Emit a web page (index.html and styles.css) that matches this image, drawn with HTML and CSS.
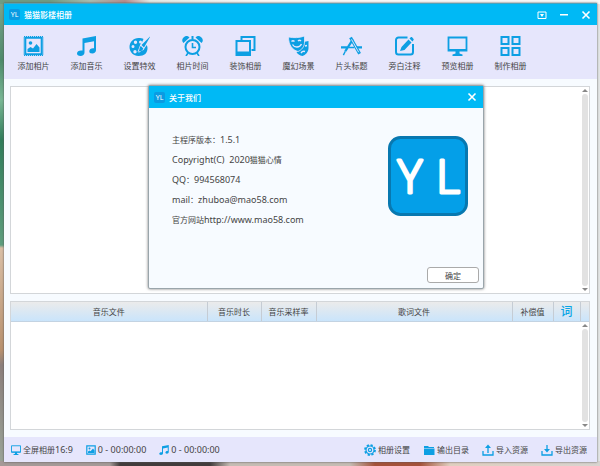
FILE: index.html
```
<!DOCTYPE html>
<html lang="zh-CN">
<head>
  <meta charset="UTF-8">
  <meta name="viewport" content="width=device-width, initial-scale=1.0">
  <title>猫猫影楼相册</title>
  <link rel="stylesheet" href="styles.css">
</head>
<body>
  <!-- shared icons -->
  <svg class="sprite" aria-hidden="true">
    <symbol id="note" viewBox="0 0 20 20">
      <path fill="currentColor" d="M6 2.500 19.500 0v14.200c0 1.900-1.600 3.300-3.700 3.300s-3-1-3-2.300c0-1.700 1.700-3 3.800-3h.9V5.200L8 7v9.500C8 18.600 6.300 20 4 20s-3.500-1-3.500-2.400c0-1.800 1.800-3.100 4-3.100H6z"/>
    </symbol>
    <symbol id="monitor" viewBox="0 0 20 20">
      <path fill="none" stroke="currentColor" stroke-width="1.800" d="M1 1.500h18v13H1z"/>
      <path fill="currentColor" d="M1 13h18v2H1zM8 15h4v2.500l3 1V20H5v-1.500l3-1z"/>
    </symbol>
    <symbol id="cross" viewBox="0 0 10 10">
      <path fill="none" stroke="currentColor" stroke-width="1.600" d="M1.500 1.500l7 7M8.500 1.500l-7 7"/>
    </symbol>
  </svg>

  <div class="window">
    <header class="titlebar">
      <span class="badge">YL</span>
      <h1 class="title">猫猫影楼相册</h1>
      <div class="windowButtons">
        <button class="windowButton" aria-label="菜单">
          <svg viewBox="0 0 10 10"><path fill="none" stroke="currentColor" d="M1 2h8v6.500H1z"/><path fill="currentColor" d="M3 4h4L5 7z"/></svg>
        </button>
        <button class="windowButton" aria-label="最小化">
          <svg viewBox="0 0 10 10"><path fill="currentColor" d="M1 4h8v1.500H1z"/></svg>
        </button>
        <button class="windowButton" aria-label="关闭"><svg><use href="#cross"/></svg></button>
      </div>
    </header>

    <nav class="toolbar">
      <button class="tool">
        <svg viewBox="0 0 20 20">
          <path fill="none" stroke="currentColor" stroke-width="2" d="M1.800 1.800h16.400v16.400H1.800z"/>
          <path fill="none" stroke="currentColor" stroke-width="1" stroke-dasharray="1 1" d="M.5.5h19v19H.5z"/>
          <circle cx="7" cy="7" r="1.800" fill="currentColor"/>
          <path fill="currentColor" d="M4 16v-3l3-2 2.500 1.500L13 8l3 3.500V16z"/>
        </svg>
        添加相片
      </button>
      <button class="tool"><svg><use href="#note"/></svg>添加音乐</button>
      <button class="tool">
        <svg viewBox="0 0 20 20">
          <path fill="currentColor" fill-rule="evenodd" d="M9 2C4 2 0 6 0 11c0 5 4 9 9 9 6 0 9-3 9-8 0-2-1-3-1-3l-4 5-4 3 1-5 4-9c-1-.7-3-1-5-1zM6 4.500a1.700 1.700 0 1 0 0 3.400 1.700 1.700 0 0 0 0-3.400zm5 0a1.500 1.500 0 1 0 0 3 1.500 1.500 0 0 0 0-3zM3.500 9a1.500 1.500 0 1 0 0 3 1.500 1.500 0 0 0 0-3zm2 5a1.700 1.700 0 1 0 0 3.400 1.700 1.700 0 0 0 0-3.400z"/>
          <path fill="#e6e6fc" d="M20 0 11 8l-3 8 6-2 3-5z"/>
          <path fill="currentColor" d="M21 0 12 9l2.500 2.500zM11.300 10l2.500 2.500c-.7 2-2 3-5 3 1.500-1 .6-3.500 2.500-5.500z"/>
        </svg>
        设置特效
      </button>
      <button class="tool">
        <svg viewBox="0 0 20 20">
          <circle cx="10" cy="11" r="7" fill="none" stroke="currentColor" stroke-width="2"/>
          <path fill="none" stroke="currentColor" stroke-width="1.600" d="M10 7v4.500h3.500M5.500 17 3.500 20M14.500 17l2 3"/>
          <path fill="currentColor" d="M1 7a3.800 3.800 0 0 1 6-5.500zM19 7a3.800 3.800 0 0 0-6-5.500z"/>
          <path fill="currentColor" d="M9 0h2v3H9z"/>
        </svg>
        相片时间
      </button>
      <button class="tool">
        <svg viewBox="0 0 20 20">
          <path fill="none" stroke="currentColor" stroke-width="2" d="M6 4V1h13v13h-3"/>
          <path fill="none" stroke="currentColor" stroke-width="2" d="M1 5h13.500v14H1z"/>
          <path fill="currentColor" d="M1 15.500h13.500V19H1z"/>
        </svg>
        装饰相册
      </button>
      <button class="tool">
        <svg viewBox="0 0 20 20">
          <path fill="currentColor" d="M15 6l5-1v7c0 4-3 7-6 8-3-.5-5-2-6-4 5-2 7-5 7-10z"/>
          <path fill="currentColor" stroke="#e6e6fc" stroke-width=".8" d="M0 1c5 1 11 1 16-1v6c0 5-3 8-6.500 9.500C4 14 0 9 0 1z"/>
          <path fill="none" stroke="#e6e6fc" stroke-width="1.400" d="M3 5.500c1-1 2-1 3 0M9.500 5c1-1 2-1 3 0M4 8.500c2 3.500 7 3.500 9-.5M12.500 17c1-1.500 2.500-2 4-1.500M16.500 10l2-.5"/>
        </svg>
        魔幻场景
      </button>
      <button class="tool">
        <svg viewBox="0 0 22 20">
          <path fill="none" stroke="currentColor" stroke-width="2.400" d="M12.500 3 4.500 15.500M0 11.500h7M15 11.500h7"/>
          <path fill="none" stroke="currentColor" stroke-width="3.200" d="M10 1l9.500 17"/>
          <path fill="none" stroke="#e6e6fc" stroke-width="1" d="M11 3l7.500 13.500"/>
          <path fill="none" stroke="currentColor" stroke-width="1.500" d="M4.500 15.500l-2 4M8 11.500h6"/>
        </svg>
        片头标题
      </button>
      <button class="tool">
        <svg viewBox="0 0 20 20">
          <path fill="none" stroke="currentColor" stroke-width="2" d="M13 1.500H4A2.500 2.500 0 0 0 1.500 4v12A2.500 2.500 0 0 0 4 18.500h12a2.500 2.500 0 0 0 2.500-2.500V8"/>
          <path fill="currentColor" d="M7 11l7-7.500 3 3L10 14l-4.500 1zM15 2.500 16.500 1c.7-.6 3.200 2 2.700 2.700L18 5.500z"/>
        </svg>
        旁白注释
      </button>
      <button class="tool"><svg><use href="#monitor"/></svg>预览相册</button>
      <button class="tool">
        <svg viewBox="0 0 20 20">
          <path fill="none" stroke="currentColor" stroke-width="2" d="M1 1h7v7H1zM12 1h7v7h-7zM1 12h7v7H1zM12 12h7v7h-7z"/>
        </svg>
        制作相册
      </button>
    </nav>

    <main class="content">
      <section class="panel photos">
        <div class="scrollbar"><i class="arrow up"></i><i class="thumb"></i><i class="arrow down"></i></div>
      </section>
      <section class="panel music">
        <table class="musicTable">
          <thead>
            <tr>
              <th>音乐文件</th>
              <th class="colTime">音乐时长</th>
              <th class="colRate">音乐采样率</th>
              <th>歌词文件</th>
              <th class="colOffset">补偿值</th>
              <th class="colLyric">词</th>
              <th class="colEnd"></th>
            </tr>
          </thead>
        </table>
        <div class="scrollbar"><i class="arrow up"></i><i class="thumb"></i><i class="arrow down"></i></div>
      </section>
    </main>

    <footer class="statusbar">
      <span class="status"><svg><use href="#monitor"/></svg><span>全屏相册<span class="latin">16:9</span></span></span>
      <span class="status">
        <svg viewBox="0 0 10 10"><path fill="none" stroke="currentColor" stroke-width="1.200" d="M.8.8h8.400v8.400H.8z"/><circle cx="3.500" cy="3.500" r="1" fill="currentColor"/><path fill="currentColor" d="M2 8V6.500L3.500 5.500l1 .7L7 3.500l1.500 2V8z"/></svg>
        <span class="latin">0 - 00:00:00</span>
      </span>
      <span class="status"><svg><use href="#note"/></svg><span class="latin">0 - 00:00:00</span></span>
      <div class="actions">
        <button class="action">
          <svg viewBox="0 0 12 12">
            <circle cx="6" cy="6" r="5" fill="none" stroke="currentColor" stroke-width="1.800" stroke-dasharray="2.200 1.727"/>
            <circle cx="6" cy="6" r="4" fill="none" stroke="currentColor" stroke-width="1.200"/>
            <circle cx="6" cy="6" r="1.600" fill="none" stroke="currentColor" stroke-width="1.200"/>
          </svg>相册设置
        </button>
        <button class="action">
          <svg viewBox="0 0 12 12"><path fill="currentColor" d="M1 2h4l1 1h5v1H1zM1 4.500h10.500V11H1z"/></svg>输出目录
        </button>
        <button class="action">
          <svg viewBox="0 0 12 12"><path fill="none" stroke="currentColor" stroke-width="1.300" d="M1 7v4h10V7M6 9V3"/><path fill="currentColor" d="M6 .5 9 4H3z"/></svg>导入资源
        </button>
        <button class="action">
          <svg viewBox="0 0 12 12"><path fill="none" stroke="currentColor" stroke-width="1.300" d="M1 7v4h10V7M6 1v5"/><path fill="currentColor" d="M6 8.500 9 5H3z"/></svg>导出资源
        </button>
      </div>
    </footer>
  </div>

  <div class="dialog" role="dialog" aria-labelledby="aboutTitle">
    <div class="dialogTitle">
      <span class="badge">YL</span>
      <h2 class="title" id="aboutTitle">关于我们</h2>
      <button class="windowButton" aria-label="关闭"><svg><use href="#cross"/></svg></button>
    </div>
    <div class="dialogBody">
      <div class="about">
        <p>主程序版本：<span class="latin">1.5.1</span></p>
        <p><span class="latin">Copyright(C)&nbsp; 2020</span>猫猫心情</p>
        <p><span class="latin">QQ</span>：<span class="latin">994568074</span></p>
        <p><span class="latin">mail</span>：<span class="latin">zhuboa@mao58.com</span></p>
        <p>官方网站<span class="latin">http://www.mao58.com</span></p>
      </div>
      <svg class="logo" viewBox="0 0 80 80">
        <rect x="1.500" y="1.500" width="77" height="77" rx="11" fill="#049fe8" stroke="#0878b0" stroke-width="3"/>
        <text class="logoText" x="22" y="57">Y</text>
        <text class="logoText" x="60" y="57">L</text>
      </svg>
    </div>
    <div class="dialogFooter"><button class="okButton">确定</button></div>
  </div>
</body>
</html>
```
FILE: styles.css
```
* {
  box-sizing: border-box;
}
body {
  margin: 0;
  height: 100vh;
  padding: 3px 3px 4px 4px;
  display: flex;
  position: relative;
  overflow: hidden;
  font-family: "Noto Sans", "Noto Sans CJK SC", sans-serif;
  font-size: 8px;
  color: #444;
  /* desktop wallpaper behind the window */
  background:
    linear-gradient(to right, #6f9c83 0 50px, #a9bdb0 90px, #b98d8d 125px, #e4e9e4 150px, #f7f7f7 260px 100%) top / 100% 4px no-repeat,
    linear-gradient(to right, #a59a98 0 110px, #423c3c 120px 210px, #c5bcb4 230px 350px, #a5523a 375px 420px, #e0cfc0 450px, #d8d4d0 100%) bottom / 100% 5px no-repeat,
    linear-gradient(#7fa58e 0, #4e8b6b 60px, #78b795 100px, #2f7d5b 140px, #5d9d7e 245px, #d9bfa6 248px, #b8916f 350px, #8b7f7c 365px, #9aa598 100%) left / 4px 100% no-repeat,
    #e3e6e6;
}
button {
  border: 0;
  padding: 0;
  background: none;
  font: inherit;
  color: inherit;
  cursor: pointer;
}
.sprite {
  position: absolute;
  width: 0;
  height: 0;
}
.latin {
  font-size: 9px;
}
.window {
  flex: 1;
  display: flex;
  flex-direction: column;
  background: #f7fbff;
  border-top: 1px solid #4aa3bd;
  box-shadow: 0 0 2px #555;
}
.titlebar, .dialogTitle {
  display: flex;
  align-items: center;
  gap: 4px;
  height: 21px;
  padding: 0 6px 0 5px;
  background: #00b9f5;
  color: white;
}
.badge {
  width: 11px;
  height: 11px;
  border-radius: 2px;
  background: #0a9be2;
  color: white;
  font-size: 7px;
  line-height: 11px;
  text-align: center;
}
.title {
  flex: 1;
  margin: 0;
  font-size: 8px;
  font-weight: 500;
}
.windowButtons {
  display: flex;
  gap: 12px;
}
.windowButton {
  width: 10px;
  height: 10px;
}
.windowButton svg {
  display: block;
  width: 10px;
  height: 10px;
}
.toolbar {
  display: flex;
  height: 54px;
  padding: 0 3px;
  background: #e6e6fc;
}
.tool {
  width: 53px;
  padding-top: 3px;
  display: flex;
  flex-direction: column;
  align-items: center;
  justify-content: center;
  gap: 4px;
  line-height: 12px;
}
.tool svg {
  width: 21px;
  height: 20px;
  color: #0d9fe3;
}
.content {
  flex: 1;
  display: flex;
  flex-direction: column;
  gap: 7px;
  padding: 7px 7px 7px 6px;
}
.panel {
  position: relative;
  background: white;
  border: 1px solid #d3d6d9;
}
.photos {
  flex: 209;
  display: flex;
  justify-content: flex-end;
}
.music {
  flex: 129;
  display: flex;
  flex-direction: column;
  align-items: flex-end;
}
.scrollbar {
  flex: 0 1 auto;
  width: 8px;
  padding: 2px 1px;
  display: flex;
  flex-direction: column;
  align-items: center;
  gap: 2px;
}
.music .scrollbar {
  flex: 1;
}
.thumb {
  flex: 1;
  width: 6px;
  border-radius: 3px;
  background: #e2e2e2;
}
.arrow {
  border: 3px solid transparent;
}
.up {
  border-top: 0;
  border-bottom-color: #888;
}
.down {
  border-bottom: 0;
  border-top-color: #888;
}
.musicTable {
  width: 100%;
  table-layout: fixed;
  border-collapse: collapse;
  background: linear-gradient(#ebebeb, #c8e4fc);
}
.musicTable th {
  height: 20px;
  padding: 0;
  border-right: 1px solid #c5ccd4;
  border-bottom: 1px solid #c3d3e2;
  font-weight: normal;
}
.musicTable .colTime {
  width: 54px;
}
.musicTable .colRate {
  width: 55px;
}
.musicTable .colOffset {
  width: 41px;
}
.musicTable .colLyric {
  width: 27px;
  font-size: 12px;
  line-height: 12px;
  font-weight: 500;
  color: #0aa5e6;
}
.musicTable .colEnd {
  width: 9px;
  border-right: 0;
}
.statusbar {
  display: flex;
  align-items: center;
  gap: 13px;
  height: 25px;
  padding: 0 10px 0 7px;
  background: #e6e6fc;
}
.status, .action {
  display: flex;
  align-items: center;
  gap: 2px;
  white-space: nowrap;
}
.status svg {
  width: 10px;
  height: 10px;
  color: #0d9fe3;
}
.actions {
  margin-left: auto;
  display: flex;
  gap: 13px;
}
.action svg {
  width: 12px;
  height: 12px;
  color: #0d9fe3;
}
.dialog {
  position: absolute;
  top: 85px;
  left: 148px;
  width: 336px;
  background: #f7fbff;
  border: 1px solid #9aa5ab;
  border-radius: 2px;
  box-shadow: 0 0 3px #777;
}
.dialogTitle {
  height: 22px;
}
.dialogBody {
  display: flex;
  justify-content: space-between;
  padding: 22px 15px 0 23px;
}
.about p {
  margin: 0;
  line-height: 20px;
}
.logo {
  width: 80px;
  height: 80px;
  margin-top: 6px;
}
.logoText {
  font-family: "Open Sans", sans-serif;
  font-size: 46px;
  font-weight: 300;
  fill: white;
  stroke: white;
  stroke-width: 3px;
  stroke-linejoin: round;
  text-anchor: middle;
}
.dialogFooter {
  display: flex;
  justify-content: flex-end;
  padding: 37px 4px 5px;
}
.okButton {
  width: 52px;
  height: 16px;
  border: 1px solid #aaa;
  border-radius: 3px;
  background: white;
}
```
